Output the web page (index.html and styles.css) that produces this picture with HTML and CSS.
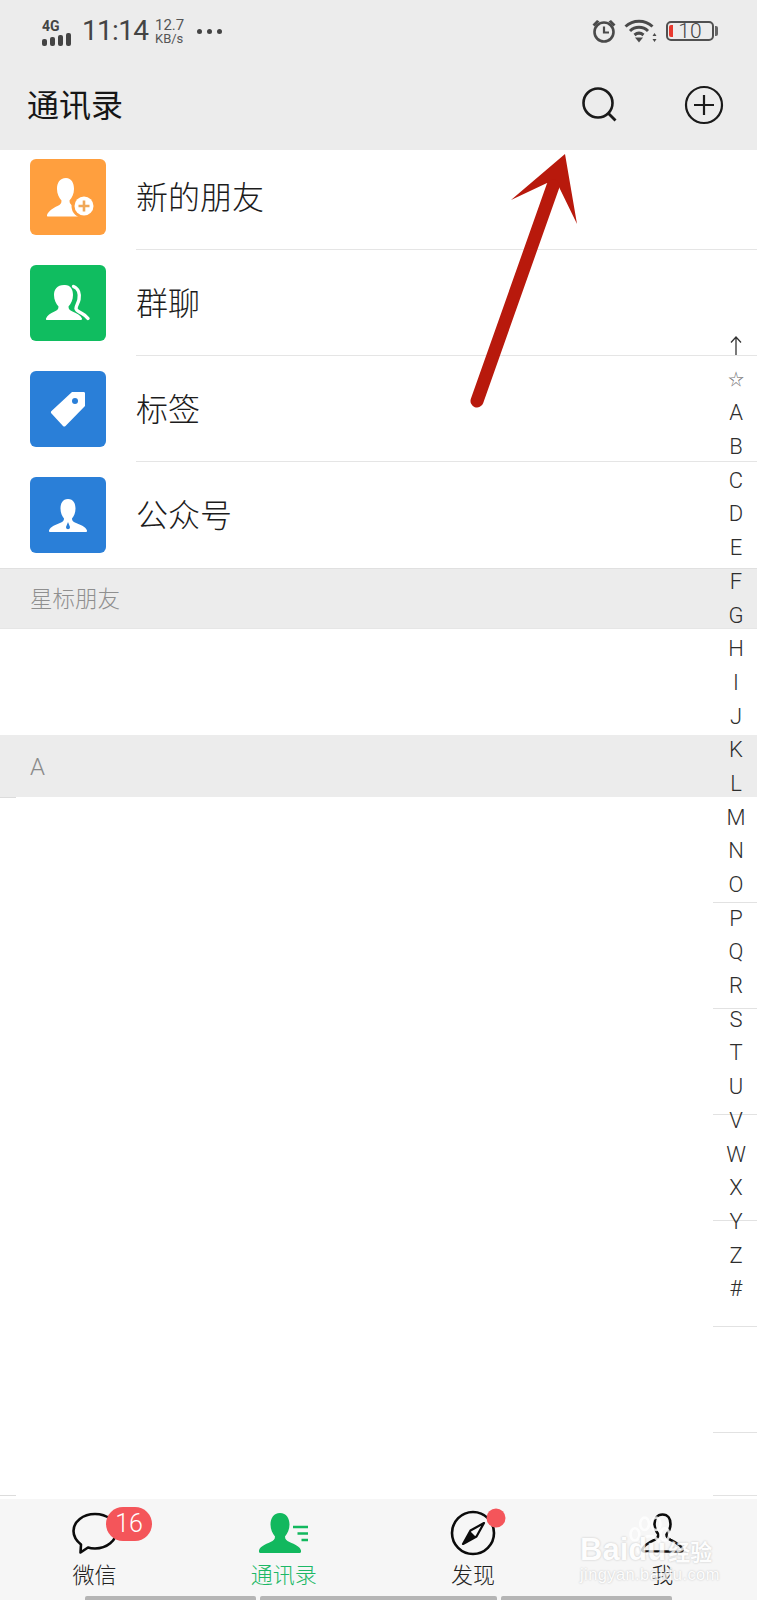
FILE: index.html
```html
<!DOCTYPE html>
<html lang="zh-CN">
<head>
<meta charset="utf-8">
<title>通讯录</title>
<link rel="stylesheet" href="styles.css">
</head>
<body>
<div class="phone">
  <header class="top">
    <div class="status">
      <div class="status-left">
        <div class="signal">
          <span class="net">4G</span>
          <span class="bars"><i class="b1"></i><i class="b2"></i><i class="b3"></i><i class="b4"></i></span>
        </div>
        <span class="time">11:14</span>
        <div class="speed"><span class="speed-num">12.7</span><span class="speed-unit">KB/s</span></div>
        <span class="dots"><i></i><i></i><i></i></span>
      </div>
      <div class="status-right">
        <svg class="alarm" width="26" height="26" viewBox="0 0 26 26"><circle cx="13" cy="14" r="9.500" fill="none" stroke="#4a4a4a" stroke-width="2.600"/><path d="M13 8.500v6h5" fill="none" stroke="#4a4a4a" stroke-width="2.200"/><path d="M1.500 6.500 6 2l2.500 1.500-5 5zM24.500 6.500 20 2l-2.500 1.500 5 5z" fill="#4a4a4a"/></svg>
        <svg class="wifi" width="33" height="26" viewBox="0 0 33 26"><path d="M1.500 8.500C9 1.500 21 1.500 28.500 8.500M6 13c5-5 13-5 18 0M10.500 17c3-2.500 6-2.500 9 0" fill="none" stroke="#4a4a4a" stroke-width="3"/><path d="M11 19.500h8L15 24.500z" fill="#4a4a4a"/><path d="M30.500 15l2 3h-4zM30.500 24l-2-3h4z" fill="#4a4a4a"/></svg>
        <div class="battery"><span class="level"></span><span class="pct">10</span><span class="nub"></span></div>
      </div>
    </div>
    <div class="titlebar">
      <h1 class="title">通讯录</h1>
      <div class="actions">
        <svg class="action-search" width="38" height="38" viewBox="0 0 38 38"><circle cx="17" cy="17" r="14.500" fill="none" stroke="#1a1a1a" stroke-width="2.600"/><path d="M27.500 27.500 34.500 34.500" stroke="#1a1a1a" stroke-width="2.800" fill="none"/></svg>
        <svg class="action-plus" width="40" height="40" viewBox="0 0 40 40"><circle cx="20" cy="20" r="18" fill="none" stroke="#1a1a1a" stroke-width="2.200"/><path d="M20 10v20M10 20h20" stroke="#1a1a1a" stroke-width="2.200" fill="none"/></svg>
      </div>
    </div>
  </header>

  <main class="list">
    <div class="row row-first">
      <div class="tile tile-orange">
        <svg width="76" height="76" viewBox="0 0 76 76"><path d="M36 19c-6.500 0-9 5-9 11 0 5 2 8.500 4.500 11.500 0 3-1 4-4 5.500-4.500 2-9 5-10.500 9-.3 1 .2 1.500 1.500 1.500h34c1 0 1.500-.5 1.500-1.500-1.500-4-6-7-10.500-9-3-1.500-4-2.500-4-5.500 2.500-3 4.500-6.500 4.500-11.500 0-6-2.500-11-8-11z" fill="#fff"/><circle cx="54" cy="47" r="12.500" fill="#ff9f3e"/><circle cx="54" cy="47" r="9.500" fill="#fff"/><path d="M54 41.500v11M48.500 47h11" stroke="#f0a858" stroke-width="2.600"/></svg>
      </div>
      <div class="label-wrap"><span class="label">新的朋友</span></div>
    </div>
    <div class="row">
      <div class="tile tile-green">
        <svg width="76" height="76" viewBox="0 0 76 76"><path d="M34 20c-7 0-10 4.500-10 10 0 5 2 8.500 4.500 11.500 0 2.500-1 3.500-4 5-4.500 2-7 3.500-8.500 7-.3 1 .2 1.500 1.500 1.500h33c1 0 1.500-.5 1.500-1.500-1.500-3.500-5-5-9.500-7-3-1.500-4-2.500-4-5 2.500-3 4.500-6.500 4.500-11.500 0-5.500-2.500-10-8-10z" fill="#fff"/><path d="M43.500 21.500c5 2 6.500 7.500 5.500 13-.8 4-3 6-3 9 0 2 3 3.500 6 5 2.500 1.200 4.500 3 6 5" fill="none" stroke="#fff" stroke-width="3.400" stroke-linecap="round"/></svg>
      </div>
      <div class="label-wrap"><span class="label">群聊</span></div>
    </div>
    <div class="row">
      <div class="tile tile-blue">
        <svg width="76" height="76" viewBox="0 0 76 76"><path d="M42 21h11.500c1 0 1.500.5 1.500 1.500V35L35.500 55c-.8.800-1.700.800-2.500 0L21.500 42.500c-.8-.8-.8-1.700 0-2.500z" fill="#fff"/><circle cx="45" cy="30" r="3" fill="#2a7fd8"/></svg>
      </div>
      <div class="label-wrap"><span class="label">标签</span></div>
    </div>
    <div class="row row-last">
      <div class="tile tile-blue">
        <svg width="76" height="76" viewBox="0 0 76 76"><path d="M38 22c-5.500 0-7.500 4.500-7.500 9.500 0 4.500 1.500 7.500 3.500 10 0 2.500-1 3-3.500 4.200-4.500 2-10 3.300-11.500 7.800-.2 1 .3 1.500 1.500 1.500h35c1.200 0 1.700-.5 1.500-1.500-1.500-4.500-7-5.800-11.500-7.800-2.500-1.200-3.500-1.700-3.500-4.200 2-2.500 3.500-5.500 3.500-10 0-5-2-9.500-7.500-9.500z" fill="#fff"/><path d="M38 45l2 5c0 1.500-1 2.200-2 2.200s-2-.7-2-2.200z" fill="#2a7fd8"/></svg>
      </div>
      <div class="label-wrap"><span class="label">公众号</span></div>
    </div>

    <div class="section">星标朋友</div>
    <div class="blank"></div>
    <div class="section section-a"><span>A</span></div>

    <div class="blank"><i class="rule-left rule-top"></i><i class="rule"></i></div>
    <div class="blank"><i class="rule"></i></div>
    <div class="blank"><i class="rule"></i></div>
    <div class="blank"><i class="rule"></i></div>
    <div class="blank"><i class="rule"></i></div>
    <div class="blank"><i class="rule"></i></div>
    <div class="blank blank-end"><i class="rule-left"></i><i class="rule"></i></div>
  </main>

  <nav class="tabs">
    <div class="tab">
      <svg class="tab-icon" width="60" height="48" viewBox="0 0 60 48"><path d="M15.500 41.500l.5-8C11 29.500 8.500 24.500 8.500 20 8.500 10.500 18 3 30 3s21.500 7.500 21.500 17S42 37.500 30 37.500c-2.500 0-5-.3-7-1z" fill="none" stroke="#0b0b0b" stroke-width="2.600" stroke-linejoin="round"/></svg>
      <span class="tab-label">微信</span>
      <span class="badge">16</span>
    </div>
    <div class="tab tab-on">
      <svg class="tab-icon" width="60" height="48" viewBox="0 0 60 48"><path d="M26 2c-6.500 0-9.500 5.500-9.500 11.500 0 5 2 9 4.500 12 0 3-1.500 4-4.500 5.500C11 33.500 6 35.500 5 39.500 4.700 41.200 5.500 42 7 42h38c1.500 0 2.300-.8 2-2.500-1-4-6-6-11.500-8.500-3-1.500-4.500-2.500-4.500-5.500 2.500-3 4.500-7 4.500-12C35.500 7.500 32.500 2 26 2z" fill="#12b85e"/><path d="M39 16h15M43.500 22.500H54M47.500 29H54" stroke="#12b85e" stroke-width="2.600" fill="none"/></svg>
      <span class="tab-label">通讯录</span>
    </div>
    <div class="tab">
      <svg class="tab-icon" width="60" height="48" viewBox="0 0 60 48"><circle cx="30" cy="22" r="21" fill="none" stroke="#0b0b0b" stroke-width="2.600"/><path d="M41 12 27.500 19.500 20 33 33.500 25.500z" fill="none" stroke="#0b0b0b" stroke-width="2.200" stroke-linejoin="round"/><path d="M27 20 20 33 33 26z" fill="#0b0b0b"/><circle cx="53" cy="7" r="9.500" fill="#f4555a"/></svg>
      <span class="tab-label">发现</span>
    </div>
    <div class="tab">
      <svg class="tab-icon" width="60" height="48" viewBox="0 0 60 48"><path d="M30.500 3.500c-5.500 0-8 4.500-8 9.500 0 4.500 2 8 4 10.500 0 3-1.500 4-4 5.300-4.500 2.200-10 4.700-12 9.200-.5 1.300 0 2.500 1.500 2.500h37c1.500 0 2-1.200 1.500-2.500-2-4.500-7.500-7-12-9.200-2.500-1.300-4-2.300-4-5.300 2-2.500 4-6 4-10.500 0-5-2.500-9.500-8-9.500z" fill="none" stroke="#0b0b0b" stroke-width="2.600"/></svg>
      <span class="tab-label">我</span>
    </div>
  </nav>
  <div class="home-bars"><i class="hb hb1"></i><i class="hb hb2"></i><i class="hb hb1"></i></div>

  <div class="index">
    <span><svg class="up" width="12" height="20" viewBox="0 0 12 20"><path d="M6 19V1M1 6.500 6 1l5 5.500" fill="none" stroke="#333" stroke-width="1.300"/></svg></span><span class="star">☆</span><span>A</span><span>B</span><span>C</span><span>D</span><span>E</span><span>F</span><span>G</span><span>H</span><span>I</span><span>J</span><span>K</span><span>L</span><span>M</span><span>N</span><span>O</span><span>P</span><span>Q</span><span>R</span><span>S</span><span>T</span><span>U</span><span>V</span><span>W</span><span>X</span><span>Y</span><span>Z</span><span>#</span>
  </div>

  <svg class="arrow" width="90" height="270" viewBox="0 0 90 270"><path d="M76 4 22 50 58 33 70 37 88 74z" fill="#b8190c"/><path d="M64 36-12 251" fill="none" stroke="#b8190c" stroke-width="13" stroke-linecap="round"/></svg>

  <div class="watermark">
    <svg class="paw" width="44" height="46" viewBox="0 0 50 50"><g fill="none" stroke="#fff" stroke-width="3"><ellipse cx="9" cy="22" rx="5" ry="7"/><ellipse cx="20" cy="10" rx="5" ry="7"/><ellipse cx="33" cy="10" rx="5" ry="7"/><ellipse cx="43" cy="22" rx="5" ry="7"/><path d="M26 24c-8 0-14 10-14 15 0 6 8 6 14 4 6 2 14 2 14-4 0-5-6-15-14-15z"/></g></svg>
    <div class="wm-top"><span class="wm-bai">Bai</span><span class="wm-du">du</span><span class="wm-cn">经验</span></div>
    <div class="wm-url">jingyan.baidu.com</div>
  </div>
</div>
</body>
</html>
```

FILE: styles.css
```css
* { box-sizing: border-box; }
html, body { margin: 0; padding: 0; background: #fff; }
body { font-family: "Noto Sans CJK SC", "Noto Sans", sans-serif; }
.phone { position: relative; width: 757px; height: 1600px; overflow: hidden; background: #fff; }

.top { background: #ececec; height: 150px; }
.status { height: 62px; display: flex; justify-content: space-between; align-items: center; padding: 0 40px 0 42px; color: #444; font-family: Roboto, "Liberation Sans", sans-serif; }
.status-left, .status-right { display: flex; align-items: center; }
.signal { width: 31px; display: flex; flex-direction: column; gap: 1px; margin-right: 9px; margin-top: 3px; }
.net { font-size: 14px; line-height: 12px; font-weight: 700; color: #444; }
.bars { display: flex; align-items: flex-end; gap: 3px; height: 13px; }
.bars i { display: block; width: 5px; background: #444; border-radius: 2px; }
.b1 { height: 7px; }
.b2 { height: 9px; }
.b3 { height: 11px; }
.b4 { height: 13px; }
.time { font-size: 28px; line-height: 34px; color: #444; width: 73px; letter-spacing: -.7px; }
.speed { display: flex; flex-direction: column; font-size: 13px; line-height: 13px; color: #555; width: 42px; margin-top: 2px; }
.speed-num { font-size: 15px; }
.speed-unit { font-size: 13px; }
.dots { display: flex; gap: 5px; }
.dots i { display: block; width: 5px; height: 5px; border-radius: 50%; background: #444; }
.alarm { margin-right: 7px; }
.wifi { margin-right: 9px; }
.battery { position: relative; width: 48px; height: 20px; border: 2px solid #505050; border-radius: 5px; display: flex; align-items: center; justify-content: center; margin-right: 3px; }
.level { position: absolute; left: 1px; top: 2px; width: 4px; height: 12px; background: #e8392e; border-radius: 2px 0 0 2px; }
.pct { font-size: 21px; line-height: 16px; font-weight: 300; color: #444; }
.nub { position: absolute; right: -6px; top: 3px; width: 3px; height: 10px; background: #666; border-radius: 0 2px 2px 0; }

.titlebar { height: 88px; display: flex; justify-content: space-between; align-items: center; padding: 0 33px 0 27px; }
.title { margin: -6px 0 0; font-size: 32px; line-height: 44px; font-weight: 400; color: #161616; }
.actions { display: flex; align-items: center; gap: 65px; margin-top: -2px; }

.list { display: flex; flex-direction: column; }
.row { height: 106px; display: flex; align-items: center; padding-left: 30px; }
.row-first { height: 100px; }
.row-first .tile { margin-top: -6px; }
.tile { flex: none; width: 76px; height: 76px; border-radius: 6px; display: block; }
.tile svg { display: block; }
.tile-orange { background: #ff9f3e; }
.tile-green { background: #10bd60; }
.tile-blue { background: #2a7fd8; }
.label-wrap { flex: 1; align-self: stretch; margin-left: 30px; display: flex; align-items: center; border-bottom: 1px solid #e5e5e5; }
.row-last .label-wrap { border-bottom: none; }
.label { font-size: 32px; line-height: 44px; font-weight: 300; color: #1c1c1c; margin-top: -4px; }
.row-first .label { margin-top: -10px; }

.section { height: 61px; background: #ececec; border-top: 1px solid #e0e0e0; border-bottom: 1px solid #e6e6e6; padding-left: 30px; font-size: 22.500px; line-height: 56px; font-weight: 300; color: #8f8f8f; }
.section-a { height: 62px; border-top: none; border-bottom: none; font-family: Roboto, sans-serif; font-size: 24px; font-weight: 300; line-height: 64px; color: #8a8a8a; }
.blank { height: 106px; display: flex; align-items: flex-end; justify-content: flex-end; }
.rule { display: block; width: 44px; height: 1px; background: #e2e2e2; }
.rule-left { display: block; width: 16px; height: 1px; background: #dcdcdc; margin-right: auto; }
.rule-top { align-self: flex-start; }
.blank-end { height: 63px; }

.tabs { height: 97px; margin-top: 3px; background: #f6f6f6; display: grid; grid-template-columns: repeat(4, 1fr); }
.tab { position: relative; display: flex; flex-direction: column; align-items: center; padding-top: 12px; }
.tab-icon { display: block; overflow: visible; }
.tab-label { font-size: 22px; line-height: 30px; margin-top: -1px; font-weight: 300; color: #222; }
.tab-on .tab-label { color: #1cb866; }
.badge { position: absolute; left: 106px; top: 8px; width: 46px; height: 34px; border-radius: 17px; background: #f4555a; color: #fff; font-family: Roboto, sans-serif; font-size: 25px; font-weight: 300; line-height: 34px; text-align: center; }
.home-bars { height: 5px; background: #f6f6f6; display: flex; gap: 4px; padding-left: 85px; }
.hb { display: block; height: 5px; background: #b5b5b5; border-radius: 2px 2px 0 0; }
.hb1 { width: 171px; }
.hb2 { width: 237px; }

.index { position: absolute; top: 329px; left: 716px; width: 40px; display: flex; flex-direction: column; align-items: center; font-family: Roboto, sans-serif; font-size: 22px; font-weight: 300; color: #2e2e2e; }
.index span { display: flex; align-items: center; justify-content: center; height: 33.700px; line-height: 33.700px; }
.up { display: block; }
.index .star { color: #777; font-family: "DejaVu Sans", sans-serif; font-size: 16px; }

.arrow { position: absolute; left: 489px; top: 150px; overflow: visible; }

.watermark { position: absolute; left: 580px; top: 1506px; width: 140px; height: 80px; color: #fff; opacity: .8; pointer-events: none; }
.paw { position: absolute; left: 47px; top: 8px; }
.wm-top { position: absolute; left: 0; top: 26px; display: flex; align-items: baseline; line-height: 36px; font-family: "Liberation Sans", sans-serif; font-weight: 700; text-shadow: 0 0 2px #b0b0b0; }
.wm-bai { font-size: 31px; }
.wm-du { font-size: 31px; margin-right: 2px; }
.wm-cn { font-size: 22px; font-family: "Noto Sans CJK SC", sans-serif; }
.wm-url { position: absolute; left: 0; top: 58px; font-family: "Liberation Sans", sans-serif; font-size: 16.500px; line-height: 20px; letter-spacing: .4px; text-shadow: 0 0 2px #b0b0b0; white-space: nowrap; }
```
